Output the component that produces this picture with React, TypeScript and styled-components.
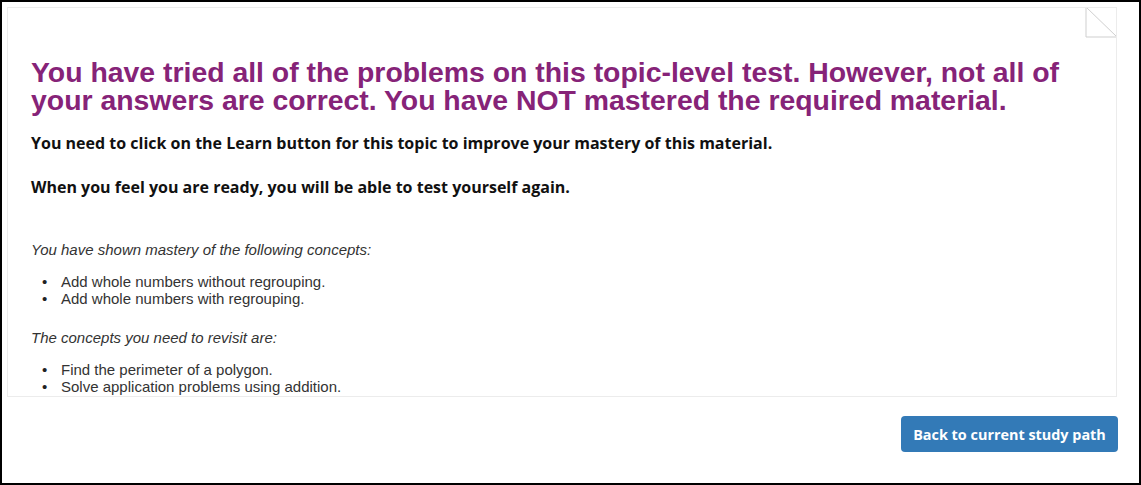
import React from "react";
import styled, { createGlobalStyle } from "styled-components";

const Global = createGlobalStyle`
  html, body { margin: 0; padding: 0; background: #fff; }
  * { box-sizing: border-box; }
`;

const Frame = styled.div`
  width: 1141px;
  height: 485px;
  border: 2px solid #000;
  padding: 5px 22px 0 5px;
  display: flex;
  flex-direction: column;
  font-family: Arial, "Liberation Sans", sans-serif;
`;

const Sheet = styled.section`
  position: relative;
  width: 1110px;
  height: 390px;
  border: 1px solid #ececec;
  background: #fff;
  padding: 50px 24px 0 23px;
  overflow: hidden;
`;

const Corner = styled.svg`
  position: absolute;
  top: -1px;
  right: -1px;
  width: 32px;
  height: 31px;
`;

const Heading = styled.h1`
  margin: 0 0 19px;
  font-family: "Liberation Sans", Arial, sans-serif;
  font-weight: bold;
  font-size: 28.4px;
  line-height: 28px;
  color: #862378;
`;

const Lead = styled.p<{ $gap: number }>`
  margin: 0 0 ${(p) => p.$gap}px;
  font-family: "Open Sans", Lato, sans-serif;
  font-weight: 700;
  font-size: 16px;
  line-height: 20px;
  color: #111;
`;

const Note = styled.p<{ $top: number }>`
  margin: ${(p) => p.$top}px 0 0;
  font-family: "Liberation Sans", Arial, sans-serif;
  font-style: italic;
  font-size: 15px;
  line-height: 17px;
  color: #333;
`;

const Bullets = styled.ul`
  margin: 16px 0 0;
  padding-left: 30px;
  list-style: none;
  font-family: "Liberation Sans", Arial, sans-serif;
  font-size: 15px;
  line-height: 16.7px;
  color: #333;
`;

const Item = styled.li`
  &::before {
    content: "•";
    display: inline-block;
    width: 19px;
    margin-left: -19px;
    color: #222;
  }
`;

const Footer = styled.div`
  display: flex;
  justify-content: flex-end;
  padding-top: 20px;
  margin-right: -1px;
`;

const Button = styled.button`
  width: 217px;
  height: 36px;
  margin-top: -1px;
  border: none;
  border-radius: 4px;
  background: #337ab7;
  color: #fff;
  font-family: "Open Sans", Lato, sans-serif;
  font-weight: 700;
  font-size: 14.4px;
  cursor: pointer;
`;

const mastered = [
  "Add whole numbers without regrouping.",
  "Add whole numbers with regrouping.",
];
const revisit = [
  "Find the perimeter of a polygon.",
  "Solve application problems using addition.",
];

export default function App() {
  return (
    <>
      <Global />
      <Frame>
        <Sheet>
          <Corner viewBox="0 0 32 31">
            <rect x="0" y="0" width="32" height="31" fill="#fff" />
            <path d="M1 0 V30 H32 M1 0 L32 30" fill="none" stroke="#cfcfcf" strokeWidth="1" />
          </Corner>
          <Heading>
            You have tried all of the problems on this topic-level test. However, not all of
            your answers are correct. You have NOT mastered the required material.
          </Heading>
          <Lead $gap={24}>
            You need to click on the Learn button for this topic to improve your mastery of this
            material.
          </Lead>
          <Lead $gap={0}>When you feel you are ready, you will be able to test yourself again.</Lead>
          <Note $top={44}>You have shown mastery of the following concepts:</Note>
          <Bullets>
            {mastered.map((t) => (
              <Item key={t}>{t}</Item>
            ))}
          </Bullets>
          <Note $top={22}>The concepts you need to revisit are:</Note>
          <Bullets>
            {revisit.map((t) => (
              <Item key={t}>{t}</Item>
            ))}
          </Bullets>
        </Sheet>
        <Footer>
          <Button>Back to current study path</Button>
        </Footer>
      </Frame>
    </>
  );
}
